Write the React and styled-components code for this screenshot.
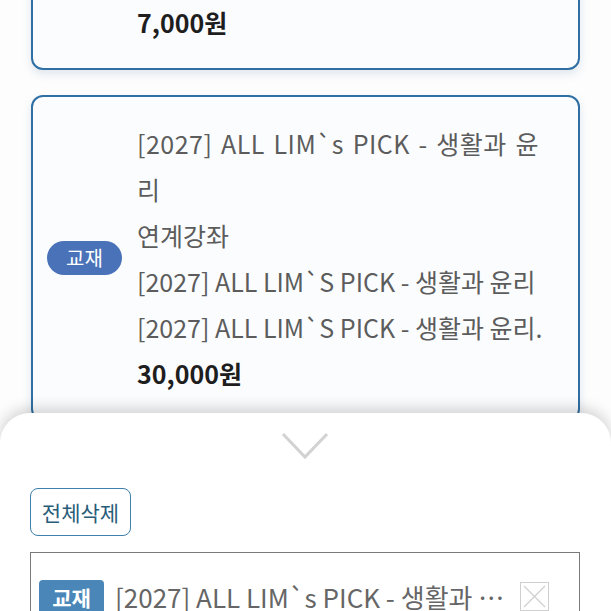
import React from 'react';
import styled, { createGlobalStyle } from 'styled-components';

const FONT = `"Noto Sans CJK KR", "Noto Sans", sans-serif`;

const GlobalStyle = createGlobalStyle`
  html, body {
    margin: 0;
    padding: 0;
    background: #fdfdfd;
    font-family: ${FONT};
  }
  #root {
    height: 611px;
    overflow: hidden;
    position: relative;
  }
`;

const cart = [
  {
    title: '[2027] ALL LIM`s 주간지',
    lines: [
      '연계강좌',
      '[2027] ALL LIM`S PICK - 생활과 윤리',
      '[2027] ALL LIM`S PICK - 생활과 윤리.',
    ],
    price: '7,000원',
  },
  {
    title: '[2027] ALL LIM`s PICK - 생활과 윤리',
    lines: [
      '연계강좌',
      '[2027] ALL LIM`S PICK - 생활과 윤리',
      '[2027] ALL LIM`S PICK - 생활과 윤리.',
    ],
    price: '30,000원',
  },
];

// list is scrolled: only the bottom of the first card shows
const List = styled.div`
  display: flex;
  flex-direction: column;
  gap: 25px;
  padding: 0 31px;
  margin-top: -210px;
`;

const Card = styled.article`
  display: flex;
  align-items: center;
  gap: 15px;
  padding: 23px 39px 23px 14px;
  border: 2px solid #2f6fa3;
  border-radius: 12px;
  background: #fbfcfe;
  box-shadow: 0 4px 10px rgba(40, 90, 140, 0.14);
`;

const Pill = styled.span`
  flex-shrink: 0;
  width: 75px;
  height: 34px;
  border-radius: 17px;
  background: #4a72b8;
  color: #fff;
  font-size: 20px;
  line-height: 34px;
  text-align: center;
`;

const Info = styled.div`
  flex: 1;
  min-width: 0;
  font-size: 25px;
  line-height: 46px;
  color: #5c5c5c;
`;

const Title = styled.div`
  text-align: justify;
  letter-spacing: 0.5px;
`;

const Line = styled.div`
  white-space: nowrap;
`;

const Price = styled.div`
  color: #1e1e1e;
  font-weight: 700;
  font-size: 25px;
`;

const Sheet = styled.section`
  position: absolute;
  left: 0;
  right: 0;
  bottom: 0;
  height: 198px;
  padding: 0 31px 0 30px;
  background: #fff;
  border-radius: 30px 30px 0 0;
  box-shadow: 0 -5px 14px rgba(0, 0, 0, 0.16);
`;

const Handle = styled.div`
  display: flex;
  justify-content: center;
  padding-top: 19px;
  height: 28px;
`;

const ClearButton = styled.button`
  display: block;
  margin-top: 28px;
  width: 101px;
  height: 48px;
  padding: 0;
  border: 1.5px solid #3d80ab;
  border-radius: 8px;
  background: #fff;
  color: #285c78;
  font-family: ${FONT};
  font-size: 21px;
`;

const Picked = styled.div`
  margin-top: 16px;
  border: 1.5px solid #7a7a7a;
  padding: 25px 30px 0 8px;
  height: 60px;
`;

const PickedRow = styled.div`
  display: flex;
  align-items: center;
  gap: 11px;
`;

const Tag = styled.span`
  flex-shrink: 0;
  width: 65px;
  height: 34px;
  border-radius: 4px;
  background: #4a86b8;
  color: #fff;
  font-weight: 700;
  font-size: 21px;
  line-height: 34px;
  text-align: center;
`;

const PickedName = styled.span`
  flex: 1;
  min-width: 0;
  margin-right: -4px;
  white-space: nowrap;
  overflow: hidden;
  text-overflow: ellipsis;
  font-size: 26px;
  color: #666;
`;

const RemoveBox = styled.span`
  flex-shrink: 0;
  width: 29px;
  height: 29px;
  box-sizing: border-box;
  border: 1px solid #cfcfcf;
  display: flex;
  align-items: center;
  justify-content: center;
`;

const App = () => (
  <>
    <GlobalStyle />
    <List>
      {cart.map((item, i) => (
        <Card key={i}>
          <Pill>교재</Pill>
          <Info>
            <Title>{item.title}</Title>
            {item.lines.map((l, j) => (
              <Line key={j}>{l}</Line>
            ))}
            <Price>{item.price}</Price>
          </Info>
        </Card>
      ))}
    </List>
    <Sheet>
      <Handle>
        <svg width="48" height="28" viewBox="0 0 48 28">
          <polyline points="2,2 24,25 46,2" fill="none" stroke="#d2d2d2" strokeWidth="3" />
        </svg>
      </Handle>
      <ClearButton>전체삭제</ClearButton>
      <Picked>
        <PickedRow>
          <Tag>교재</Tag>
          <PickedName>[2027] ALL LIM`s PICK - 생활과 윤리</PickedName>
          <RemoveBox>
            <svg width="27" height="27" viewBox="0 0 27 27">
              <path d="M3 3 L24 24 M24 3 L3 24" stroke="#cfcfcf" strokeWidth="1.2" />
            </svg>
          </RemoveBox>
        </PickedRow>
      </Picked>
    </Sheet>
  </>
);

export default App;
